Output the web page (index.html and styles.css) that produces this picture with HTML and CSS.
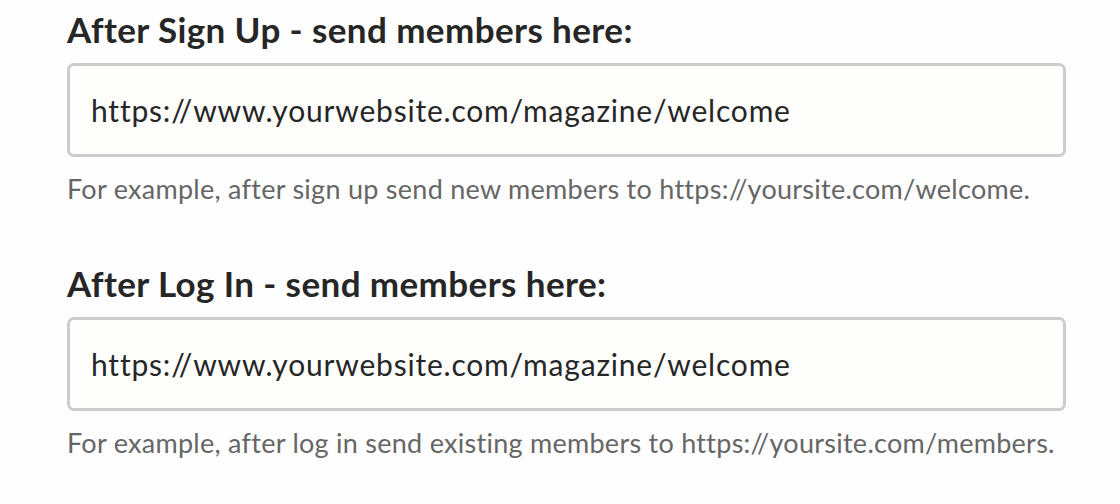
FILE: index.html
```html
<!DOCTYPE html>
<html>
<head>
<meta charset="utf-8">
<link rel="stylesheet" href="styles.css">
</head>
<body>
<div class="form">
  <div class="field">
    <label class="label">After Sign Up - send members here:</label>
    <div class="input">https://www.yourwebsite.com/magazine/welcome</div>
    <p class="help">For example, after sign up send new members to https://yoursite.com/welcome.</p>
  </div>
  <div class="field">
    <label class="label">After Log In - send members here:</label>
    <div class="input">https://www.yourwebsite.com/magazine/welcome</div>
    <p class="help">For example, after log in send existing members to https://yoursite.com/members.</p>
  </div>
</div>
</body>
</html>
```
FILE: styles.css
```css
html, body {
  margin: 0;
  padding: 0;
  background: #fefefe;
  font-family: Lato, "Open Sans", sans-serif;
}
.form {
  padding: 8px 0 0 67px;
  width: 999px;
  display: flex;
  flex-direction: column;
  gap: 57px;
}
.field {
  display: flex;
  flex-direction: column;
}
.label {
  font-weight: 700;
  font-size: 35px;
  line-height: 42px;
  letter-spacing: 0.4px;
  color: #262626;
  margin-bottom: 13px;
}
.input {
  box-sizing: border-box;
  height: 94px;
  border: 3px solid #cccccc;
  border-radius: 7px;
  background: #fefefd;
  padding: 0 21px 1px;
  display: flex;
  align-items: center;
  font-size: 30px;
  line-height: 36px;
  letter-spacing: 0.8px;
  color: #262626;
}
.help {
  margin: 16px 0 0;
  font-size: 27px;
  line-height: 32px;
  letter-spacing: 0.27px;
  color: #666666;
}
```
